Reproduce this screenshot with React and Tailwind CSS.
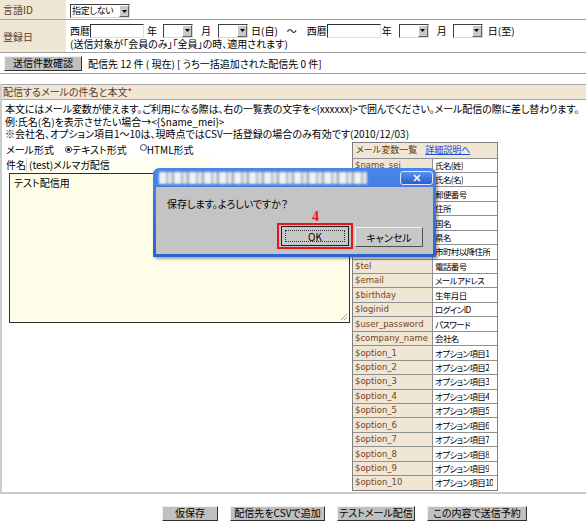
import React from 'react';

const vars = [
  ['$name_sei', '氏名(姓)'],
  ['$name_mei', '氏名(名)'],
  ['$zip', '郵便番号'],
  ['$address', '住所'],
  ['$country', '国名'],
  ['$pref', '県名'],
  ['$city', '市町村以降住所'],
  ['$tel', '電話番号'],
  ['$email', 'メールアドレス'],
  ['$birthday', '生年月日'],
  ['$loginid', 'ログインID'],
  ['$user_password', 'パスワード'],
  ['$company_name', '会社名'],
  ...Array.from({ length: 10 }, (_, i) => [`$option_${i + 1}`, `オプション項目${i + 1}`]),
];

// classic windows dropdown
function Select({ className, label }) {
  return (
    <span className={`inline-flex h-[14px] items-stretch border border-t-[#404040] border-l-[#404040] border-r-[#d8d8d8] border-b-[#d8d8d8] bg-white ${className}`}>
      <span className="flex-1 overflow-hidden whitespace-nowrap pl-[1px] text-[9px] leading-[12px] tracking-[-0.3px]">{label}</span>
      <span className="flex w-[10px] shrink-0 items-center justify-center border border-t-white border-l-white border-r-[#606060] border-b-[#606060] bg-[#c8c8c8]">
        <svg width="5" height="3" viewBox="0 0 5 3">
          <path d="M0 0h5L2.5 3z" fill="#000" />
        </svg>
      </span>
    </span>
  );
}

function TextInput({ className }) {
  return (
    <span className={`inline-block h-[14px] border border-t-[#303030] border-l-[#303030] border-r-[#e0e0e0] border-b-[#e0e0e0] bg-white ${className}`} />
  );
}

function Radio({ checked }) {
  return (
    <span className="relative -top-[3px] inline-flex h-[7px] w-[7px] items-center justify-center rounded-full border border-[#404040] bg-white">
      {checked && <span className="h-[3px] w-[3px] rounded-full bg-black" />}
    </span>
  );
}

function GrayButton({ className, children }) {
  return (
    <span className={`flex h-[15px] items-center justify-center whitespace-nowrap border border-t-[#f0f0f0] border-l-[#f0f0f0] border-r-[#303030] border-b-[#303030] bg-[#c0c0c0] leading-none ${className}`}>
      {children}
    </span>
  );
}

export default function App() {
  return (
    <div className="relative h-[525px] w-[586px] overflow-hidden bg-white text-[10px] text-black [font-family:'Noto_Sans_CJK_JP',sans-serif] [font-feature-settings:'palt']">
      {/* search conditions */}
      <div className="flex h-[20px] border-b border-[#a0a0a0]">
        <div className="w-[66px] shrink-0 bg-[#efe6d5] pl-[3px] leading-[19px] text-[#5a3c1c]">言語ID</div>
        <div className="pl-[4px] pt-[2px]">
          <Select className="w-[60px]" label="指定しない" />
        </div>
      </div>
      <div className="flex h-[33px] border-b border-[#a0a0a0]">
        <div className="flex w-[66px] shrink-0 items-center bg-[#efe6d5] pl-[3px] text-[#5a3c1c]">登録日</div>
        <div className="pl-[4px] pt-[3px]">
          <div className="flex h-[15px] items-center whitespace-nowrap">
            <span>西暦</span>
            <TextInput className="w-[54px]" />
            <span className="ml-[3px]">年</span>
            <Select className="ml-[6px] w-[30px]" label="" />
            <span className="ml-[8px]">月</span>
            <Select className="ml-[7px] w-[30px]" label="" />
            <span className="ml-[3px]">日(自)</span>
            <span className="ml-[9px]">～</span>
            <span className="ml-[10px]">西暦</span>
            <TextInput className="w-[54px]" />
            <span className="ml-[1px]">年</span>
            <Select className="ml-[7px] w-[30px]" label="" />
            <span className="ml-[8px]">月</span>
            <Select className="ml-[6px] w-[30px]" label="" />
            <span className="ml-[5px]">日(至)</span>
          </div>
          <div className="leading-[12px]">(送信対象が「会員のみ」「全員」の時、適用されます)</div>
        </div>
      </div>
      <div className="flex h-[21px] items-center border-b border-[#a0a0a0] pl-[4px]">
        <GrayButton className="w-[78px]">送信件数確認</GrayButton>
        <span className="ml-[6px] whitespace-nowrap">配信先 12 件 ( 現在) [ うち一括追加された配信先 0 件]</span>
      </div>

      {/* mail body section */}
      <div className="mt-[10px] border-b-2 border-l-2 border-[#cccccc] pb-[1px]">
        <div className="h-[16px] border-y border-[#a8a8a8] bg-[#efe6d5] pl-[1px] leading-[14px] text-[#5a3c1c]">
          配信するメールの件名と本文<span className="text-[#e01010]">*</span>
        </div>
        <div className="whitespace-nowrap pl-[3px] pt-[3px] leading-[12.5px]">
          <p className="tracking-[-0.1px]">本文にはメール変数が使えます。ご利用になる際は、右の一覧表の文字を&lt;{'{'}xxxxxx{'}'}&gt;で囲んでください。メール配信の際に差し替わります。</p>
          <p>例:氏名(名)を表示させたい場合→&lt;{'{'}$name_mei{'}'}&gt;</p>
          <p>※会社名、オプション項目1～10は、現時点ではCSV一括登録の場合のみ有効です(2010/12/03)</p>
        </div>
        <div className="flex">
          <div className="w-[350px] shrink-0 pl-[4px] pt-[2px]">
            <div className="flex h-[13px] items-center whitespace-nowrap">
              <span>メール形式</span>
              <span className="ml-[11px]"><Radio checked /></span>
              <span>テキスト形式</span>
              <span className="ml-[13px]"><Radio /></span>
              <span>HTML形式</span>
            </div>
            <div className="mt-[2px] flex h-[14px] items-center whitespace-nowrap">
              <span className="w-[20px] shrink-0">件名</span>
              <span className="flex h-[14px] w-[186px] items-center border-l border-[#d0d0d0] bg-[#fffff0] pl-[2px]">(test)メルマガ配信</span>
            </div>
            <div className="relative ml-[3px] mt-[1px] h-[150px] w-[341px] border border-[#303030] bg-[#fdfde8] pl-[4px] pt-[3px] leading-[12px]">
              テスト配信用
              <svg className="absolute bottom-[1px] right-[1px]" width="8" height="8" viewBox="0 0 8 8">
                <path d="M7 1L1 7M7 4L4 7" stroke="#a0a0a0" strokeWidth="1" />
              </svg>
            </div>
          </div>

          {/* variable list */}
          <div className="mt-[1px] w-[146px] border border-[#808080]">
            <div className="flex h-[15px] items-center whitespace-nowrap bg-[#efe6d5] pl-[3px] text-[9px] text-[#5a3c1c]">
              メール変数一覧
              <span className="ml-[8px] text-[#1d4fd8] underline">詳細説明へ</span>
            </div>
            {vars.map(([key, name]) => (
              <div key={key} className="flex h-[14.45px] border-t border-[#909090]">
                <div className="flex w-[80px] shrink-0 items-center overflow-hidden whitespace-nowrap border-r border-[#909090] bg-[#efe6d5] pl-[2px] text-[8.5px] text-[#7a4420] [font-family:'DejaVu_Sans',sans-serif]">
                  {key}
                </div>
                <div className="flex items-center overflow-hidden whitespace-nowrap pl-[2px] text-[8.5px] tracking-[-0.6px]">{name}</div>
              </div>
            ))}
          </div>
        </div>
      </div>

      {/* action buttons */}
      <div className="mt-[12px] flex gap-[12px] pl-[162px]">
        <GrayButton className="w-[56px]">仮保存</GrayButton>
        <GrayButton className="w-[95px]">配信先をCSVで追加</GrayButton>
        <GrayButton className="w-[78px]">テストメール配信</GrayButton>
        <GrayButton className="w-[100px]">この内容で送信予約</GrayButton>
      </div>

      {/* confirm dialog */}
      <div className="absolute left-[153px] top-[168px] flex h-[89px] w-[283px] flex-col rounded-t-[6px] bg-gradient-to-b from-[#4a86ea] to-[#2a62d4] px-[3px] pb-[3px] shadow-[2px_2px_3px_rgba(0,0,0,0.35)]">
        <div className="flex h-[19px] shrink-0 items-center">
          <div className="ml-[3px] h-[12px] w-[208px] bg-[repeating-linear-gradient(90deg,#f2f3f6_0_7px,#b4b8c0_7px_9px,#e4e6ea_9px_13px,#9da2ab_13px_15px)] blur-[1.2px]" />
          <div className="ml-auto flex h-[14px] w-[33px] items-center justify-center rounded-[3px] border border-[#dfe8ff] bg-gradient-to-b from-[#5b8ff0] to-[#2a5fd0]">
            <svg width="8" height="8" viewBox="0 0 8 8">
              <path d="M1 1L7 7M7 1L1 7" stroke="#fff" strokeWidth="1.6" />
            </svg>
          </div>
        </div>
        <div className="relative flex-1 bg-[#c4c4c4] pl-[11px] pt-[10px] leading-[13px]">
          保存します。よろしいですか？
          <span className="absolute left-[156px] top-[23px] text-[14px] font-bold leading-none text-[#e8141c] [font-family:'Liberation_Serif',serif]">4</span>
          <div className="absolute left-[121px] top-[36px] h-[26px] w-[76px] border-2 border-[#e8141c]" />
          <div className="absolute left-[125px] top-[39px] flex h-[20px] w-[68px] items-center justify-center border border-[#202020] bg-[#c8c8c8]">
            <span className="absolute inset-[3px] border border-dotted border-[#303030]" />
            OK
          </div>
          <div className="absolute left-[199px] top-[40px] flex h-[20px] w-[68px] items-center justify-center border border-t-[#f0f0f0] border-l-[#f0f0f0] border-r-[#505050] border-b-[#505050] bg-[#c8c8c8]">
            キャンセル
          </div>
        </div>
      </div>
    </div>
  );
}
